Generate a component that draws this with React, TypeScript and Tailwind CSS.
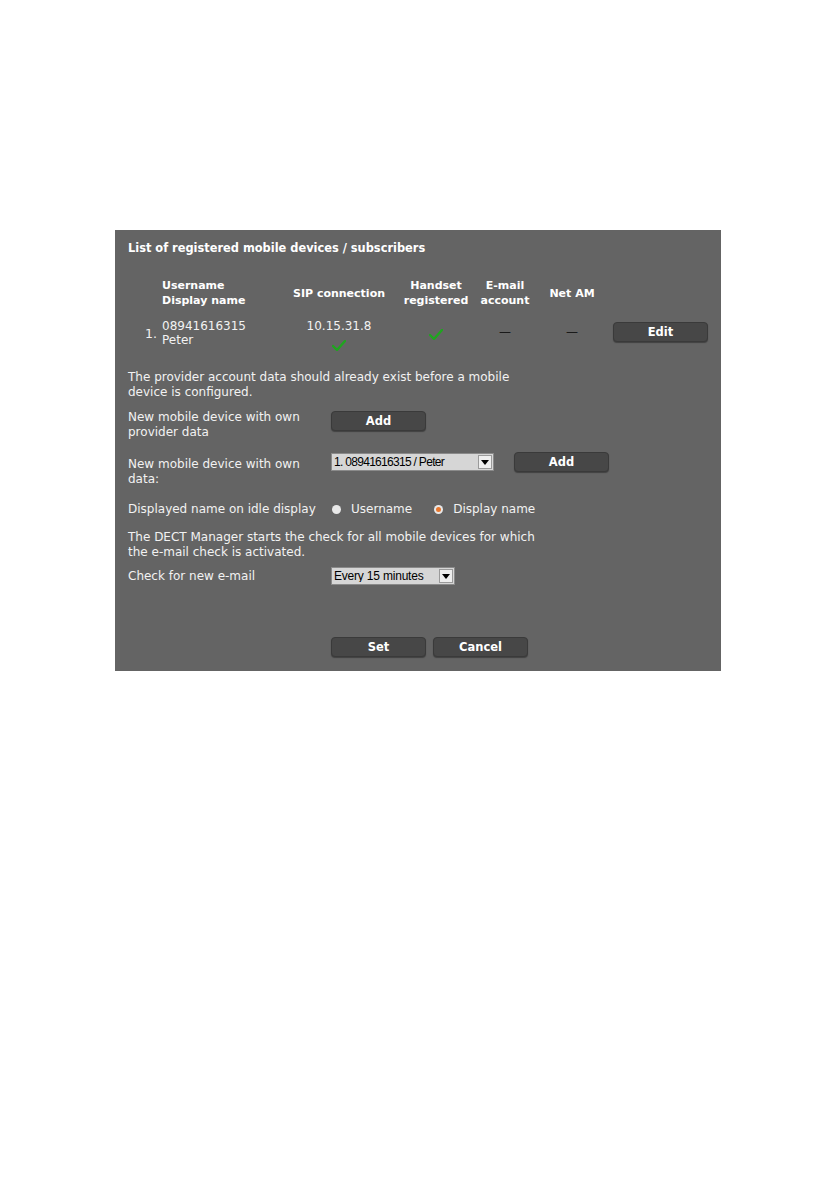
import React from 'react'

const font = { fontFamily: '"DejaVu Sans", Verdana, sans-serif' }

function Btn({ label, className = '' }: { label: string; className?: string }) {
  return (
    <div
      className={`flex h-[20px] w-[95px] items-center justify-center rounded-[4px] border border-[#3a3a3a] bg-[#474747] text-[11.5px] font-bold text-white shadow-[0_1px_1px_rgba(0,0,0,0.35)] ${className}`}
    >
      {label}
    </div>
  )
}

function Check() {
  return (
    <svg width="14" height="11" viewBox="0 0 14 11">
      <path d="M1 6 L5 10 L13 1" fill="none" stroke="#1fa51f" strokeWidth="2.4" strokeLinecap="round" strokeLinejoin="round" />
    </svg>
  )
}

function Select({ value, width, textClass = '' }: { value: string; width: string; textClass?: string }) {
  return (
    <div className={`flex h-[18px] items-center border border-[#8a8a8a] bg-[#d6d6d6] ${width}`}>
      <span
        className={`flex-1 truncate pl-[2px] text-[12px] leading-none text-black ${textClass}`}
        style={{ fontFamily: '"Liberation Sans", Arial, sans-serif' }}
      >
        {value}
      </span>
      <span className="mr-[1px] flex h-[14px] w-[14px] items-center justify-center border border-[#9a9a9a] bg-[#eeeeee]">
        <svg width="8" height="5" viewBox="0 0 8 5">
          <path d="M0 0 H8 L4 5 Z" fill="#000" />
        </svg>
      </span>
    </div>
  )
}

export default function App() {
  return (
    <div className="min-h-[1191px] w-[839px] bg-white pt-[230px]" style={font}>
      <div className="ml-[115px] h-[441px] w-[606px] bg-[#646464] pl-[13px] pt-[11px] text-[12px] leading-[15px] text-[#f2f2f2]">
        <div className="text-[11.4px] font-bold text-white">List of registered mobile devices / subscribers</div>

        {/* table header */}
        <div className="mt-[22px] grid grid-cols-[34px_118px_118px_76px_62px_72px_95px] items-center text-[11px] font-bold text-white">
          <div />
          <div>
            <div>Username</div>
            <div>Display name</div>
          </div>
          <div className="text-center">SIP connection</div>
          <div className="text-center">
            <div>Handset</div>
            <div>registered</div>
          </div>
          <div className="text-center">
            <div>E-mail</div>
            <div>account</div>
          </div>
          <div className="text-center">Net AM</div>
          <div />
        </div>

        {/* table row */}
        <div className="mt-[11px] grid grid-cols-[34px_118px_118px_76px_62px_72px_95px] items-start">
          <div className="pr-[5px] pt-[7px] text-right text-[12.5px]">1.</div>
          <div>
            <div>08941616315</div>
            <div className="-mt-[1px]">Peter</div>
          </div>
          <div className="flex flex-col items-center">
            <div>10.15.31.8</div>
            <div className="mt-[6px]">
              <Check />
            </div>
          </div>
          <div className="flex justify-center pt-[10px]">
            <Check />
          </div>
          <div className="pt-[6px] text-center text-[#1a1a1a]">—</div>
          <div className="pt-[6px] text-center text-[#1a1a1a]">—</div>
          <div className="ml-[5px] mt-[3px]">
            <Btn label="Edit" />
          </div>
        </div>

        <div className="mt-[19px]">
          <div>The provider account data should already exist before a mobile</div>
          <div>device is configured.</div>
        </div>

        <div className="mt-[10px] flex items-start">
          <div className="w-[203px]">
            <div>New mobile device with own</div>
            <div>provider data</div>
          </div>
          <Btn label="Add" className="mt-[1px]" />
        </div>

        <div className="mt-[17px] flex items-start">
          <div className="w-[203px]">
            <div>New mobile device with own</div>
            <div>data:</div>
          </div>
          <div className="-mt-[5px] flex items-center">
            <Select value="1. 08941616315 / Peter" width="w-[163px]" textClass="tracking-[-0.7px]" />
            <Btn label="Add" className="ml-[20px]" />
          </div>
        </div>

        <div className="mt-[15px] flex items-center">
          <div className="w-[203px]">Displayed name on idle display</div>
          <span className="ml-[1px] h-[9px] w-[9px] rounded-full bg-[#e8e8e8]" />
          <span className="ml-[10px]">Username</span>
          <span className="ml-[22px] flex h-[9px] w-[9px] items-center justify-center rounded-full bg-[#e8e8e8]">
            <span className="h-[5px] w-[5px] rounded-full bg-[#e8772e]" />
          </span>
          <span className="ml-[10px]">Display name</span>
        </div>

        <div className="mt-[13px]">
          <div>The DECT Manager starts the check for all mobile devices for which</div>
          <div>the e-mail check is activated.</div>
        </div>

        <div className="mt-[7px] flex items-center">
          <div className="w-[203px]">Check for new e-mail</div>
          <Select value="Every 15 minutes" width="w-[124px]" textClass="tracking-[-0.2px]" />
        </div>

        <div className="mt-[52px] flex pl-[203px]">
          <Btn label="Set" />
          <Btn label="Cancel" className="ml-[7px]" />
        </div>
      </div>
    </div>
  )
}
